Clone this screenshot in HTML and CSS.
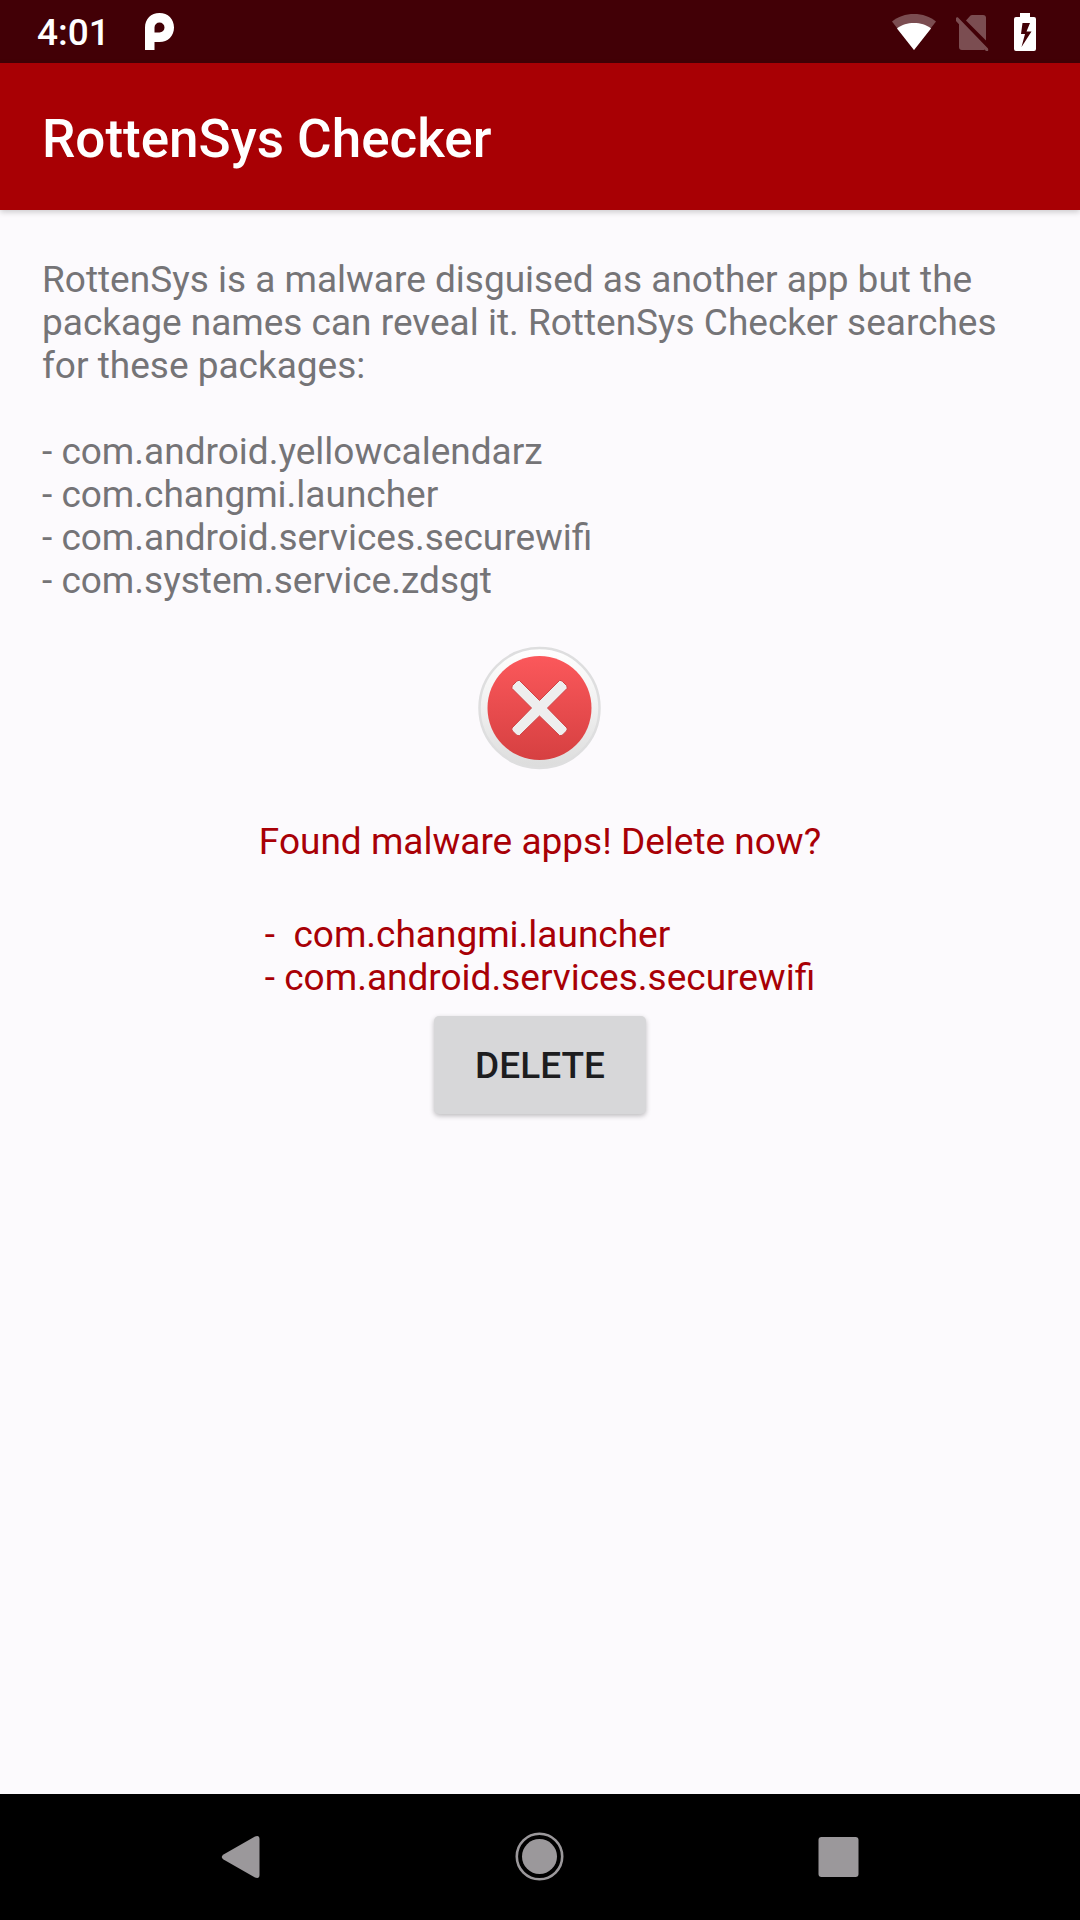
FILE: index.html
```html
<!DOCTYPE html>
<html lang="en">
<head>
<meta charset="utf-8">
<meta name="viewport" content="width=device-width, initial-scale=1">
<title>RottenSys Checker</title>
<link rel="stylesheet" href="styles.css">
</head>
<body>
<div class="status-bar">
  <time class="clock">4:01</time>
  <svg class="pie" viewBox="0 0 29 38" width="29" height="38" aria-hidden="true">
    <path fill-rule="evenodd" d="M0 37V14.500C0 6 6 0 14.500 0S29 6 29 14.500S23 29 14.500 29H9.500V37ZM9.500 19.500H14.500A5 5 0 1 0 9.500 14.500Z"/>
  </svg>
  <div class="status-icons">
    <svg viewBox="0 0 44 38" width="44" height="38" aria-hidden="true">
      <path class="faint" d="M22 37L0 8.500C6 3.500 13.500 1 22 1S38 3.500 44 8.500Z"/>
      <path d="M22 37L5 15.500C10 11.500 15.500 10 22 10S34 11.500 39 15.500Z"/>
    </svg>
    <svg viewBox="1 0 38 38" width="38" height="38" aria-hidden="true">
      <g class="faint">
        <path d="M11 7.500L15.500 2.500Q16.200 2 17 2H28Q31 2 31 5V27.500Z"/>
        <path d="M2.800 4.200L33 35.400Q33.500 37 33 38Q31.500 38.800 30.500 37.500L29.500 36.500Q29 37 28 37H7Q4 37 4 34V11.200L.6 7.500Q0 6 .8 5Q1.800 4 2.800 4.200Z"/>
      </g>
    </svg>
    <svg viewBox="0 0 22 38" width="22" height="38" aria-hidden="true">
      <path fill-rule="evenodd" d="M6 0H16V4H20Q22 4 22 6V36Q22 38 20 38H2Q0 38 0 36V6Q0 4 2 4H6ZM8.500 10L7 21H11L7.500 34L17.500 18.500H12.500L16 10Z"/>
    </svg>
  </div>
</div>
<header class="app-bar">
  <h1 class="title">RottenSys Checker</h1>
</header>
<main class="content">
  <p class="intro">RottenSys is a malware disguised as another app but the package names can reveal it. RottenSys Checker searches for these packages:</p>
  <ul class="packages">
    <li>- com.android.yellowcalendarz</li>
    <li>- com.changmi.launcher</li>
    <li>- com.android.services.securewifi</li>
    <li>- com.system.service.zdsgt</li>
  </ul>
  <section class="result">
    <svg viewBox="0 0 126 126" width="126" height="126" role="img" aria-label="Malware found">
      <defs>
        <linearGradient id="rim" x1="0" y1="0" x2="0" y2="1">
          <stop offset="0" stop-color="#ffffff"/>
          <stop offset=".5" stop-color="#f0f0f0"/>
          <stop offset="1" stop-color="#dcdcdc"/>
        </linearGradient>
        <linearGradient id="disc" x1="0" y1="0" x2="0" y2="1">
          <stop offset="0" stop-color="#fb585b"/>
          <stop offset="1" stop-color="#d64041"/>
        </linearGradient>
      </defs>
      <circle cx="62.500" cy="63" r="60" fill="url(#rim)" stroke="#dededf" stroke-width="2.500"/>
      <circle cx="62.500" cy="63" r="52" fill="url(#disc)"/>
      <g fill="#eeeeee" stroke="#d04345" stroke-width="1" transform="translate(0 1)">
        <path d="M42.500 34.500L62.500 54.500L82.500 34.500Q84 34 85.500 35.500L89.500 39.500Q90.500 41 90 42.500L70.500 62L90 82Q90.500 83.500 89.500 85L85.500 89Q84 90 82.500 89.500L62.500 70L42.500 89.500Q41 90 39.500 89L35.500 85Q34.500 83.500 35 82L54.500 62L35 42.500Q34.500 41 35.500 39.500L39.500 35.500Q41 34 42.500 34.500Z"/>
      </g>
    </svg>
    <p class="alert">Found malware apps! Delete now?</p>
    <ul class="found">
      <li>-  com.changmi.launcher</li>
      <li>- com.android.services.securewifi</li>
    </ul>
    <button class="delete" type="button">DELETE</button>
  </section>
</main>
<nav class="nav-bar" aria-label="System">
  <button type="button" aria-label="Back">
    <svg viewBox="0 0 50 50" width="50" height="50"><path d="M7.500 22.500L39 4.500Q43.500 3 43.500 7V43Q43.500 47 39 45.500L7.500 27.500Q4 25 7.500 22.500Z"/></svg>
  </button>
  <button type="button" aria-label="Home">
    <svg viewBox="0 0 50 50" width="50" height="50"><circle cx="24.500" cy="24.500" r="17.500"/><circle cx="24.500" cy="24.500" r="22.700" fill="none" stroke="#9b989b" stroke-width="2.600"/></svg>
  </button>
  <button type="button" aria-label="Recent apps">
    <svg viewBox="0 0 50 50" width="50" height="50"><rect x="4.500" y="5" width="40" height="40" rx="3"/></svg>
  </button>
</nav>
</body>
</html>
```

FILE: styles.css
```css
* {
  box-sizing: border-box;
}

body {
  margin: 0;
  min-height: 100vh;
  display: flex;
  flex-direction: column;
  background: #fcfafd;
  color: #757477;
  font: 400 37px/43px Roboto, sans-serif;
}

h1,
p,
ul {
  margin: 0;
  padding: 0;
  font: inherit;
}

li {
  list-style: none;
  white-space: pre;
}

svg {
  display: block;
}

.status-bar {
  display: flex;
  align-items: center;
  height: 63px;
  padding: 1px 44px 0 37px;
  background: #420006;
  color: #fff;
  fill: #fff;
}

.clock {
  font-weight: 500;
}

.pie {
  margin-left: 35px;
}

.status-icons {
  display: flex;
  gap: 20px;
  margin-left: auto;
}

.faint {
  opacity: .3;
}

.app-bar {
  display: flex;
  align-items: center;
  height: 147px;
  padding: 4px 42px 0;
  background: #a80004;
  color: #fff;
  box-shadow: 0 2px 6px rgba(0, 0, 0, .2);
}

.title {
  font-size: 53px;
  line-height: 62px;
  font-weight: 500;
}

.content {
  flex: 1;
  padding: 48px 42px;
}

.packages {
  margin-top: 43px;
}

.result {
  display: flex;
  flex-direction: column;
  align-items: center;
  margin-top: 43px;
  color: #a80006;
}

.alert {
  margin-top: 49px;
}

.found {
  margin-top: 50px;
}

.delete {
  height: 98px;
  margin-top: 17px;
  padding: 0 41px;
  border: 0;
  border-radius: 5px;
  background: #d7d7d9;
  box-shadow: 0 2px 5px rgba(0, 0, 0, .25);
  color: #1d1d1f;
  font: inherit;
  font-weight: 500;
}

.nav-bar {
  display: flex;
  height: 126px;
  padding: 0 92px;
  background: #000;
}

.nav-bar button {
  flex: 1;
  display: flex;
  align-items: center;
  justify-content: center;
  padding: 0;
  border: 0;
  background: none;
  fill: #9b989b;
}
```
